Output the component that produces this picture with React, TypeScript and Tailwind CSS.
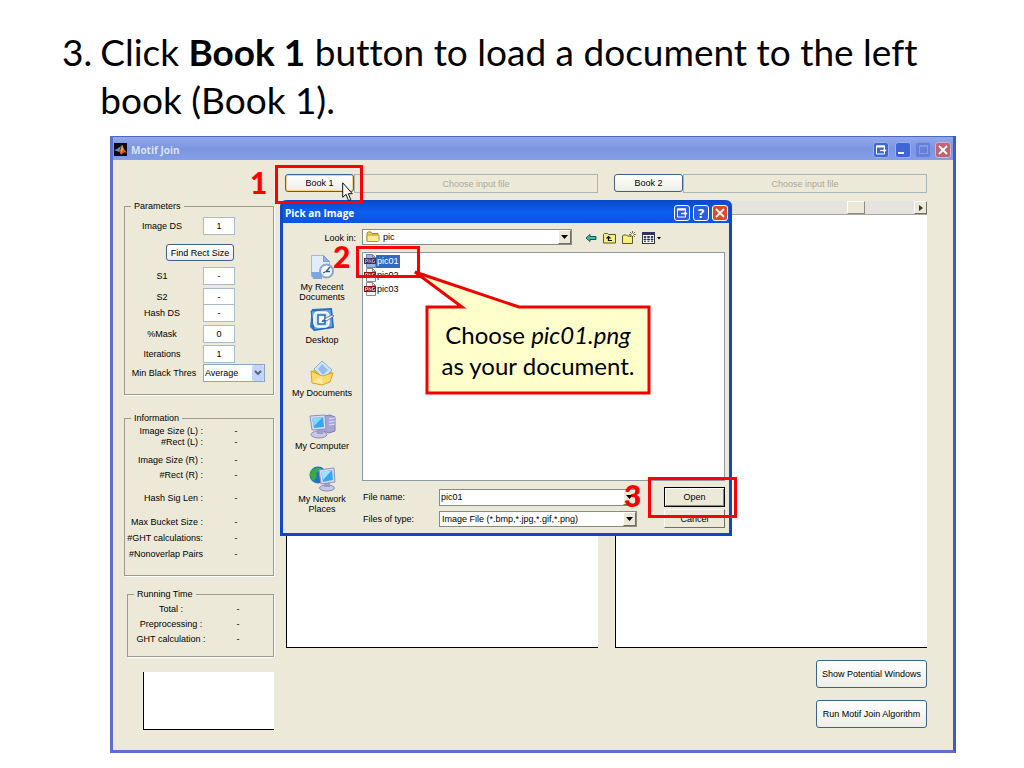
import type { ReactNode } from 'react';
import clsx from 'clsx';

const parameters = [
  { id: 'image-ds', label: 'Image DS', value: '1', space: 'mt-[5px]' },
  { id: 's1', label: 'S1', value: '-', space: 'mt-[6px]' },
  { id: 's2', label: 'S2', value: '-', space: 'mt-[3px]' },
  { id: 'hash-ds', label: 'Hash DS', value: '-', space: '-mt-[2px]' },
  { id: 'mask', label: '%Mask', value: '0', space: 'mt-[3px]' },
  { id: 'iterations', label: 'Iterations', value: '1', space: 'mt-[2px]' },
];

const information = [
  { label: 'Image Size (L) :', space: 'mt-px' },
  { label: '#Rect (L) :', space: '-mt-px' },
  { label: 'Image Size (R) :', space: 'mt-[6px]' },
  { label: '#Rect (R) :', space: 'mt-[3px]' },
  { label: 'Hash Sig Len :', space: 'mt-[11px]' },
  { label: 'Max Bucket Size :', space: 'mt-3' },
  { label: '#GHT calculations:', space: 'mt-1' },
  { label: '#Nonoverlap Pairs', space: 'mt-1' },
];

const runningTime = ['Total :', 'Preprocessing :', 'GHT calculation :'];

const files = ['pic01', 'pic02', 'pic03'];

function MatlabIcon() {
  return (
    <svg width="13" height="13" viewBox="0 0 13 13" aria-hidden="true">
      <rect width="13" height="13" fill="#0a0a14" />
      <path d="M0 7l3-1 4-3-2 6-2-1z" fill="#4aa3c8" />
      <path d="M5 8c2-1 2-6 3-6s1 2 2 4l3 4c-3-2-4 0-6 2-1-2-1-3-2-4z" fill="#e0601c" />
      <path d="M8 2l1 4-2 3z" fill="#f8c050" />
    </svg>
  );
}

function FolderIcon() {
  return (
    <svg width="14" height="12" viewBox="0 0 14 12" aria-hidden="true">
      <path d="M1 10V2l1-1h3l1 1.500h6v7.500z" fill="#f3d36b" stroke="#a88527" />
      <path d="M1 10.500V5l1-1h11v5.500l-1 1z" fill="#fdeb9c" stroke="#b8962e" />
    </svg>
  );
}

function PngIcon({ selected }: { selected: boolean }) {
  return (
    <svg width="12" height="14" viewBox="0 0 12 14" aria-hidden="true">
      <path d="M2.500.5h6l3 3v10h-9z" fill={selected ? '#9fb4dc' : '#f4f4f4'} stroke={selected ? '#6c83b5' : '#8c8c8c'} />
      <path d="M8.500.5v3h3" fill="none" stroke="#8c8c8c" />
      <rect y="4" width="12" height="6" fill={selected ? '#3e3060' : '#8d1515'} />
      <path
        d="M1.500 9V5.500h2v2h-2M5 9V5.500l2 3V5.500M10.500 5.500h-2v3h2v-1.500"
        fill="none"
        stroke={selected ? '#b7a7cb' : '#f1cccc'}
        strokeWidth=".8"
      />
    </svg>
  );
}

function RecentIcon() {
  return (
    <svg width="26" height="26" viewBox="0 0 26 26" aria-hidden="true">
      <path d="M2.500 1.500h12l6 6v15h-18z" fill="#e3edfa" stroke="#a3b9da" />
      <path d="M14.500 1.500v6h6z" fill="#8fb2e4" stroke="#7c9dcc" />
      <path d="M2 18h11v7H4z" fill="#7ea5de" />
      <circle cx="17.500" cy="17" r="7.500" fill="#8ba6cc" />
      <circle cx="17.500" cy="17" r="5.500" fill="#f2f8ff" />
      <path d="M21 13l-4 4.500h4M16 18l-2 1" fill="none" stroke="#35588e" strokeWidth="1.300" />
    </svg>
  );
}

function DesktopIcon() {
  return (
    <svg width="26" height="26" viewBox="0 0 26 26" aria-hidden="true">
      <path d="M3 2l20-1 2 20-20 3-4-4z" fill="#2f75c8" />
      <path d="M2 4l20-2 2 18-19 3z" fill="#5da3e8" stroke="#2a62ae" />
      <rect x="5" y="5" width="15" height="15" rx="4" fill="#cfe8fb" stroke="#fff" strokeWidth="1.500" />
      <path d="M9 8h7v9H9z" fill="#f4fbff" stroke="#2568b2" strokeWidth="1.500" />
      <path d="M13 14l4-3 6-3 2 1-6 4-5 2z" fill="#f7f7f7" stroke="#3b5371" strokeWidth=".7" />
      <path d="M12 15l4-3 1 2z" fill="#1f5aa8" />
    </svg>
  );
}

function DocumentsIcon() {
  return (
    <svg width="26" height="26" viewBox="0 0 26 26" aria-hidden="true">
      <path d="M2 12L9 6l13 5 2 3-9 10-12-1z" fill="#e8b93c" />
      <path d="M13 1l10 9-8 9L5 9z" fill="#cfe4fa" stroke="#8aaed8" />
      <path d="M13 4l6 6-5 5-5-6z" fill="#91bdf0" />
      <path d="M2 11l11 5 11-3-3 9-8 3-10-2z" fill="#fbd96b" stroke="#d9a42c" />
      <path d="M3 22l10-6 1 8z" fill="#fdeaa0" />
    </svg>
  );
}

function ComputerIcon() {
  return (
    <svg width="28" height="26" viewBox="0 0 28 26" aria-hidden="true">
      <path d="M16 3l6-1 5 2v14l-6 2-5-2z" fill="#a5a5d8" stroke="#8080b8" />
      <path d="M21 6l6-1M21 9l6-1M21 12l6-1" stroke="#e3e3f6" />
      <ellipse cx="11" cy="21.500" rx="8" ry="3.500" fill="#c8c8e4" stroke="#8c8cbc" />
      <path d="M9 16h6v5H9z" fill="#9c9ccb" />
      <path d="M2 3l15-1 1 14-14 1z" fill="#d9dcf2" stroke="#8d92c2" />
      <path d="M4 5l11-1 1 10-10 1z" fill="#35a7ee" />
      <path d="M4 5l11-1-9 9z" fill="#8bd6fb" />
    </svg>
  );
}

function NetworkIcon() {
  return (
    <svg width="28" height="26" viewBox="0 0 28 26" aria-hidden="true">
      <circle cx="10" cy="9" r="8.500" fill="#2071c8" />
      <path d="M2 7c2-5 7-6 11-5l-3 4-2 1 1 3-3 5c-2-1-4-3-4-8z" fill="#39a845" />
      <ellipse cx="19" cy="22" rx="7.500" ry="3" fill="#c8c8e4" stroke="#8c8cbc" />
      <path d="M16 17h6v4h-6z" fill="#9c9ccb" />
      <path d="M11 4l15-2 1 14-14 2z" fill="#d9dcf2" stroke="#8d92c2" />
      <path d="M13 6l11-2 1 10-10 2z" fill="#35a7ee" />
      <path d="M13 6l11-2-9 10z" fill="#9fe0fc" />
    </svg>
  );
}

const places = [
  { label: 'My Recent Documents', icon: <RecentIcon /> },
  { label: 'Desktop', icon: <DesktopIcon /> },
  { label: 'My Documents', icon: <DocumentsIcon /> },
  { label: 'My Computer', icon: <ComputerIcon /> },
  { label: 'My Network Places', icon: <NetworkIcon /> },
];

function RestoreGlyph() {
  return (
    <svg width="12" height="12" viewBox="0 0 12 12" aria-hidden="true">
      <path d="M1.500 2h8v8h-8z" fill="none" stroke="#fff" />
      <path d="M1 2.500h9" stroke="#fff" strokeWidth="2" />
      <path d="M5 6.500h6" stroke="#fff" strokeWidth="1.300" />
      <path d="M8.500 4.500l3 2-3 2z" fill="#fff" />
    </svg>
  );
}

function CloseGlyph() {
  return (
    <svg width="12" height="12" viewBox="0 0 12 12" aria-hidden="true">
      <path d="M2 2l8 8M10 2l-8 8" stroke="#fff" strokeWidth="1.800" />
    </svg>
  );
}

function TitleButton({ label, className, children }: { label: string; className: string; children?: ReactNode }) {
  return (
    <button
      aria-label={label}
      className={clsx('flex size-4 shrink-0 items-center justify-center rounded-[3px] border', className)}
    >
      {children}
    </button>
  );
}

function XpButton({ className, children }: { className: string; children: ReactNode }) {
  return (
    <button
      className={clsx(
        'shrink-0 whitespace-nowrap rounded-[3px] border border-[#3b618c] bg-linear-to-b from-white to-[#eeede5]',
        className,
      )}
    >
      {children}
    </button>
  );
}

function Group({ title, className, children }: { title: string; className: string; children: ReactNode }) {
  return (
    <fieldset className={clsx('border border-[#9c9a8e] shadow-[1px_1px_0_#fff]', className)}>
      <legend className="ml-[6px] px-[3px]">{title}</legend>
      {children}
    </fieldset>
  );
}

function ArrowDown() {
  return (
    <span className="pointer-events-none flex w-[13px] shrink-0 items-center justify-center border border-[#fff] border-r-[#716f64] border-b-[#716f64] bg-[#ece9d8]">
      <svg width="7" height="4" viewBox="0 0 7 4" aria-hidden="true">
        <path d="M0 0h7L3.500 4z" fill="#000" />
      </svg>
    </span>
  );
}

function BookPane({ name, focused }: { name: string; focused?: boolean }) {
  return (
    <section className="flex min-w-0 flex-1 flex-col">
      <div className="flex h-[19px] items-start">
        <XpButton
          className={clsx('h-[18px] w-[69px]', focused && 'shadow-[inset_0_0_0_1px_#fbd28a]')}
        >
          {name}
        </XpButton>
        <input
          aria-label={`${name} file`}
          disabled
          placeholder="Choose input file"
          className="h-[19px] min-w-0 flex-1 border border-[#a5b5b8] text-center placeholder:text-[#aca899]"
        />
      </div>
      <div className="mt-2 flex h-[14px] border-b border-[#a7a69a] bg-[#e4e3e0]">
        <div className="flex-1" />
        <div className="w-[18px] border border-white border-r-[#8d8b80] border-b-[#8d8b80] bg-[#ece9d8]" />
        <div className="w-[49px]" />
        <button
          aria-label="Scroll right"
          className="flex w-[13px] items-center justify-center border border-white border-r-[#716f64] border-b-[#716f64] bg-[#ece9d8]"
        >
          <svg width="4" height="6" viewBox="0 0 4 6" aria-hidden="true">
            <path d="M0 0l4 3-4 3z" fill="#333" />
          </svg>
        </button>
      </div>
      <div className="ml-px h-[433px] border-b border-l border-black bg-white" />
    </section>
  );
}

function ParametersGroup() {
  const rows = parameters.map((p) => (
    <div key={p.id} className={clsx('flex h-[18px] items-center', p.space)}>
      <label htmlFor={p.id} className="w-[78px] pr-1 text-center">
        {p.label}
      </label>
      <input
        id={p.id}
        defaultValue={p.value}
        className="h-[18px] w-8 border border-[#a9bccb] bg-white text-center"
      />
    </div>
  ));

  return (
    <Group title="Parameters" className="h-[195px]">
      {rows[0]}
      <div className="mt-[9px] flex pl-[41px]">
        <XpButton className="h-[17px] w-[68px]">Find Rect Size</XpButton>
      </div>
      {rows.slice(1)}
      <div className="mt-px flex h-[18px] items-center">
        <label htmlFor="threshold" className="w-[78px] whitespace-nowrap text-center">
          Min Black Thres
        </label>
        <div className="flex h-[18px] w-[62px] border border-[#8ba6bd] bg-white">
          <select id="threshold" className="min-w-0 flex-1 appearance-none pl-px">
            <option>Average</option>
          </select>
          <span className="flex w-3 items-center justify-center rounded-xs bg-[#c3d3fb]">
            <svg width="8" height="6" viewBox="0 0 8 6" aria-hidden="true">
              <path d="M1 1l3 3 3-3" fill="none" stroke="#4d6185" strokeWidth="1.800" />
            </svg>
          </span>
        </div>
      </div>
    </Group>
  );
}

function Sidebar() {
  return (
    <aside className="w-[150px] shrink-0 pt-[26px]">
      <ParametersGroup />
      <Group title="Information" className="mt-[17px] h-[164px]">
        {information.map((item) => (
          <div key={item.label} className={clsx('flex', item.space)}>
            <span className="w-[78px] whitespace-nowrap text-right">{item.label}</span>
            <span className="w-[66px] text-center">-</span>
          </div>
        ))}
      </Group>
      <Group title="Running Time" className="mt-3 ml-[3px] h-[69px]">
        {runningTime.map((label) => (
          <div key={label} className="mt-[3px] flex">
            <span className="w-[86px] text-center">{label}</span>
            <span className="w-12 text-center">-</span>
          </div>
        ))}
      </Group>
      <div className="mt-[15px] ml-[19px] h-[58px] border-b border-l border-black bg-white" />
    </aside>
  );
}

function ToolbarIcons() {
  return (
    <div className="ml-[13px] flex items-center gap-[6px]">
      <button aria-label="Back">
        <svg width="12" height="12" viewBox="0 0 12 12" aria-hidden="true">
          <path d="M1 6l4-3.500V4.500h6v3H5v2z" fill="#35c2b4" stroke="#12564e" />
        </svg>
      </button>
      <button aria-label="Up one level">
        <svg width="13" height="12" viewBox="0 0 13 12" aria-hidden="true">
          <path d="M.5 11V2.500l1-1h3l1 1h7V11z" fill="#f5ee82" stroke="#5d5a1a" />
          <path d="M9 8.500H5.500V5M3.500 6.500l2-2 2 2" fill="none" stroke="#111" strokeWidth="1.200" />
        </svg>
      </button>
      <button aria-label="New folder">
        <svg width="14" height="14" viewBox="0 0 14 14" aria-hidden="true">
          <path d="M.5 12.500V5l1-1h3l1 1h5v7.500z" fill="#f5ee82" stroke="#5d5a1a" />
          <path d="M10.500 0v7M7 3.500h7M8 1l5 5M13 1L8 6" stroke="#55543a" strokeWidth=".8" />
          <circle cx="10.500" cy="3.500" r="1.300" fill="#fffbd0" />
        </svg>
      </button>
      <button aria-label="View menu">
        <svg width="20" height="12" viewBox="0 0 20 12" aria-hidden="true">
          <rect x=".5" y=".5" width="12" height="11" fill="#fff" stroke="#33335e" />
          <path d="M0 1.500h13" stroke="#33335e" strokeWidth="3" />
          <path
            d="M2 4.500h2v1H2zM5.500 4.500h2v1h-2zM9 4.500h2v1H9zM2 7h2v1H2zM5.500 7h2v1h-2zM9 7h2v1H9zM2 9.500h2M5.500 9.500h2M9 9.500h2"
            stroke="#33335e"
            strokeWidth=".8"
          />
          <path d="M15 5h4l-2 2.500z" fill="#000" />
        </svg>
      </button>
    </div>
  );
}

function FileDialog() {
  return (
    <div
      role="dialog"
      aria-labelledby="dialog-title"
      className="absolute top-16 left-[170px] w-[452px] rounded-t-md border-x-3 border-b-3 border-[#1246c8] bg-[#ece9d8]"
    >
      <header className="flex h-[23px] items-center gap-[3px] rounded-t-sm bg-linear-to-b from-[#0a48c4] via-[#0a5df0] to-[#0a55e0] pt-[2px] pr-px pl-[2px] font-['Open_Sans',sans-serif]">
        <h2 id="dialog-title" className="flex-1 text-[10px] font-bold text-white">
          Pick an Image
        </h2>
        <TitleButton label="Restore" className="border-white bg-[#2c5fe0]">
          <RestoreGlyph />
        </TitleButton>
        <TitleButton label="Help" className="border-white bg-[#2c5fe0] text-[13px] font-bold text-white">
          ?
        </TitleButton>
        <TitleButton label="Close" className="border-white bg-[#dc4a26]">
          <CloseGlyph />
        </TitleButton>
      </header>

      <div className="flex h-[22px] items-end">
        <label htmlFor="look-in" className="w-[73px] pb-px text-right">
          Look in:
        </label>
        <div className="ml-[6px] flex h-4 w-[210px] border border-[#8b8a80] bg-white">
          <span className="flex items-center px-[3px]">
            <FolderIcon />
          </span>
          <select id="look-in" className="min-w-0 flex-1 appearance-none">
            <option>pic</option>
          </select>
          <ArrowDown />
        </div>
        <ToolbarIcons />
      </div>

      <div className="mt-[7px] flex pr-1">
        <nav className="flex w-[79px] shrink-0 flex-col pt-[2px] pr-px">
          {places.map((place) => (
            <button key={place.label} className="flex h-[53px] flex-col items-center px-3 leading-[10px] last:h-[50px]">
              <span className="flex h-[28px] items-start">{place.icon}</span>
              <span className={clsx(place.label.length < 15 && 'whitespace-nowrap')}>{place.label}</span>
            </button>
          ))}
        </nav>
        <div className="min-w-0 flex-1">
          <ul className="h-[229px] border border-[#8d9aa5] bg-white pt-px pl-px">
            {files.map((file, i) => (
              <li key={file} className="flex h-[14px] items-center">
                <PngIcon selected={i === 0} />
                <span className={clsx('px-px leading-[13px]', i === 0 && 'bg-[#316ac5] text-white')}>{file}</span>
              </li>
            ))}
          </ul>
          <div className="mt-[6px] flex items-center">
            <label htmlFor="file-name" className="w-[77px] pl-px">
              File name:
            </label>
            <div className="flex h-[17px] w-[198px] border border-[#8b8a80] bg-white">
              <input id="file-name" defaultValue="pic01" className="min-w-0 flex-1 pl-px" />
              <ArrowDown />
            </div>
            <button className="ml-auto h-5 w-[61px] border border-black bg-[#ece9d8] shadow-[inset_1px_1px_0_#fff,inset_-1px_-1px_0_#8b8a80]">
              Open
            </button>
          </div>
          <div className="mt-[2px] flex items-center pb-[5px]">
            <label htmlFor="file-type" className="w-[77px] pl-px">
              Files of type:
            </label>
            <div className="flex h-4 w-[198px] border border-[#8b8a80] bg-white">
              <select id="file-type" className="min-w-0 flex-1 appearance-none pl-[2px]">
                <option>Image File (*.bmp,*.jpg,*.gif,*.png)</option>
              </select>
              <ArrowDown />
            </div>
            <button className="ml-auto h-[19px] w-[61px] border border-white border-r-[#716f64] border-b-[#716f64] bg-[#ece9d8]">
              Cancel
            </button>
          </div>
        </div>
      </div>
    </div>
  );
}

// Red frames, step numbers and the callout float over the application window
function Annotations() {
  return (
    <div className="pointer-events-none absolute inset-0 font-['Lato',sans-serif] text-black">
      <svg className="absolute top-[46px] left-[232px]" width="11" height="20" viewBox="0 0 11 20" aria-hidden="true">
        <path d="M.7.8v14.500l3.400-3 2.400 6.400 2.300-1-2.500-6h4z" fill="#fff" stroke="#111" />
      </svg>
      <div className="absolute top-[29px] left-[165px] h-[39px] w-[88px] border-3 border-[#f00]" />
      <div className="absolute top-[110px] left-[246px] h-8 w-[64px] border-3 border-[#f00]" />
      <div className="absolute top-[341px] left-[538px] h-[41px] w-[89px] border-3 border-[#f00]" />
      <span className="absolute top-7 left-[140px] text-[30px] leading-9 font-black text-[#f00]">1</span>
      <span className="absolute top-[102px] left-[223px] text-[30px] leading-9 font-black text-[#f00]">2</span>
      <span className="absolute top-[341px] left-[514px] text-[30px] leading-9 font-black text-[#f00]">3</span>
      <div className="absolute top-[134px] left-[303px] h-[125px] w-[238px]">
        <svg className="absolute inset-0" width="238" height="125" viewBox="0 0 238 125" aria-hidden="true">
          <path d="M2 2l47 35H14v86h222V37H106z" fill="#ffffcc" stroke="#f00000" strokeWidth="3" />
        </svg>
        <p className="relative pt-[49px] pl-3 text-center text-[24px] leading-[31px] whitespace-nowrap">
          Choose <em>pic01.png</em>
          <br />
          as your document.
        </p>
      </div>
    </div>
  );
}

function MotifJoinWindow() {
  return (
    <main className="relative mr-[68px] ml-[110px] font-['Liberation_Sans',Arial,sans-serif] text-[9px] leading-3 text-black">
      <div className="border-x-3 border-b-3 border-[#5f6fcb] border-r-[#3c5cc0] bg-[#ece9d8]">
        <header className="flex h-6 items-center gap-1 border-t border-[#4a67c4] bg-linear-to-b from-[#92a8ea] via-[#7b95e0] to-[#849ee6] pt-[2px] pr-[2px] pl-px font-['Open_Sans',sans-serif]">
          <MatlabIcon />
          <h2 className="flex-1 text-[10px] font-bold text-[#d8e2fa]">Motif Join</h2>
          <TitleButton label="Restore" className="mr-[2px] border-[#9bb0f0] bg-[#3d66d8]">
            <RestoreGlyph />
          </TitleButton>
          <TitleButton label="Minimize" className="border-[#9bb0f0] bg-[#3d66d8]">
            <span className="mt-[6px] mr-1 h-[2px] w-[6px] bg-white" />
          </TitleButton>
          <TitleButton label="Maximize" className="border-[#8098e0] bg-[#6480d8]">
            <span className="size-[9px] border border-t-2 border-[#839ce4]" />
          </TitleButton>
          <TitleButton label="Close" className="border-[#d0b4d0] bg-[#bd6570]">
            <CloseGlyph />
          </TitleButton>
        </header>
        <div className="flex gap-[11px] pt-[14px] pr-[26px] pb-5 pl-[11px]">
          <Sidebar />
          <div className="flex min-w-0 flex-1 flex-col">
            <div className="flex gap-4">
              <BookPane name="Book 1" focused />
              <BookPane name="Book 2" />
            </div>
            <div className="mt-3 flex flex-col items-end gap-3">
              <XpButton className="h-7 w-[111px]">Show Potential Windows</XpButton>
              <XpButton className="h-7 w-[111px]">Run Motif Join Algorithm</XpButton>
            </div>
          </div>
        </div>
      </div>
      <FileDialog />
      <Annotations />
    </main>
  );
}

export default function App() {
  return (
    <div className="min-h-screen bg-white pb-4">
      <h1 className="flex gap-2 pt-7 pr-16 pb-3 pl-[62px] font-['Lato',sans-serif] text-[37px] leading-12 text-black [font-variant-ligatures:none]">
        <span>3.</span>
        <span>
          Click <b>Book 1</b> button to load a document to the left
          <br />
          book (Book 1).
        </span>
      </h1>
      <MotifJoinWindow />
    </div>
  );
}
